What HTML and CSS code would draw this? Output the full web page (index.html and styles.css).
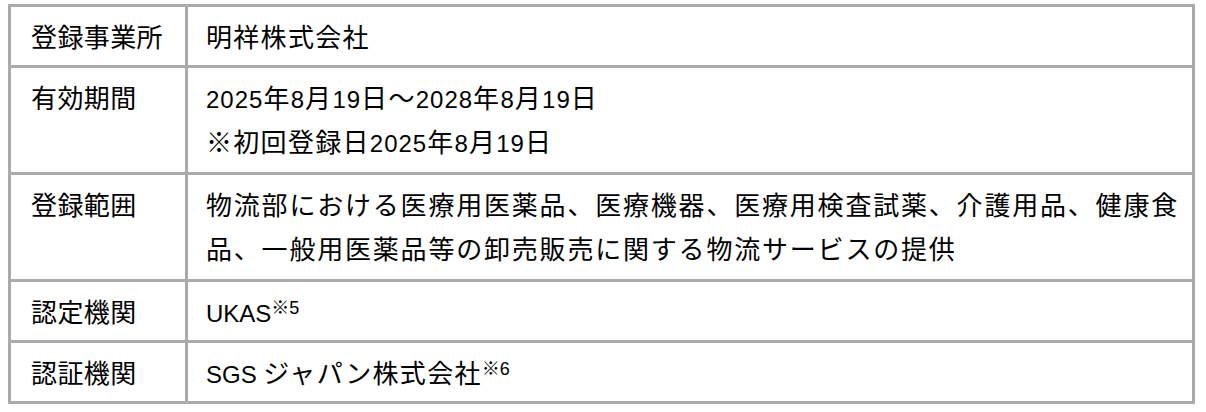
FILE: index.html
```html
<!DOCTYPE html>
<html lang="ja">
<head>
<meta charset="utf-8">
<title>登録情報</title>
<link rel="stylesheet" href="styles.css">
</head>
<body>
<div class="info">
  <div class="label">登録事業所</div>
  <div class="value">明祥株式会社</div>

  <div class="label">有効期間</div>
  <div class="value multi"><span class="num">2025</span>年<span class="num">8</span>月<span class="num">19</span>日～<span class="num">2028</span>年<span class="num">8</span>月<span class="num">19</span>日<br>※初回登録日<span class="num">2025</span>年<span class="num">8</span>月<span class="num">19</span>日</div>

  <div class="label">登録範囲</div>
  <div class="value wide multi">物流部における医療用医薬品、医療機器、医療用検査試薬、介護用品、健康食品、一般用医薬品等の卸売販売に関する物流サービスの提供</div>

  <div class="label">認定機関</div>
  <div class="value"><span class="en">UKAS</span><span class="sup">※<span class="num">5</span></span></div>

  <div class="label">認証機関</div>
  <div class="value"><span class="en">SGS </span>ジャパン株式会社<span class="sup">※<span class="num">6</span></span></div>
</div>
</body>
</html>
```
FILE: styles.css
```css
html, body {
  margin: 0;
  padding: 0;
  background: #ffffff;
}

body {
  padding: 4px 0 0 8px;
  font-family: "Noto Sans CJK JP", "Liberation Sans", sans-serif;
  font-size: 26px;
  color: #000000;
}

.info {
  display: grid;
  grid-template-columns: 174px 1fr;
  gap: 3px;
  padding: 3px;
  width: 1181px;
  background: #aaaaaa;
}

.label,
.value {
  background: #ffffff;
  line-height: 44px;
  padding: 7px 8px 7px 20px;
}

.label {
  letter-spacing: 0.4px;
}

.value {
  padding-left: 18px;
  letter-spacing: 1.3px;
}

.value.multi {
  padding-bottom: 9px;
}

.value.wide {
  letter-spacing: 1.8px;
}

.num,
.en {
  font-family: "Liberation Sans", sans-serif;
  font-size: 24px;
  line-height: 1;
  letter-spacing: 1px;
}

.en {
  letter-spacing: 0;
}

.sup {
  font-size: 18px;
  line-height: 0;
  vertical-align: 8px;
  letter-spacing: 0;
}

.sup .num {
  font-size: 18px;
  line-height: 0;
  letter-spacing: 0;
}
```
